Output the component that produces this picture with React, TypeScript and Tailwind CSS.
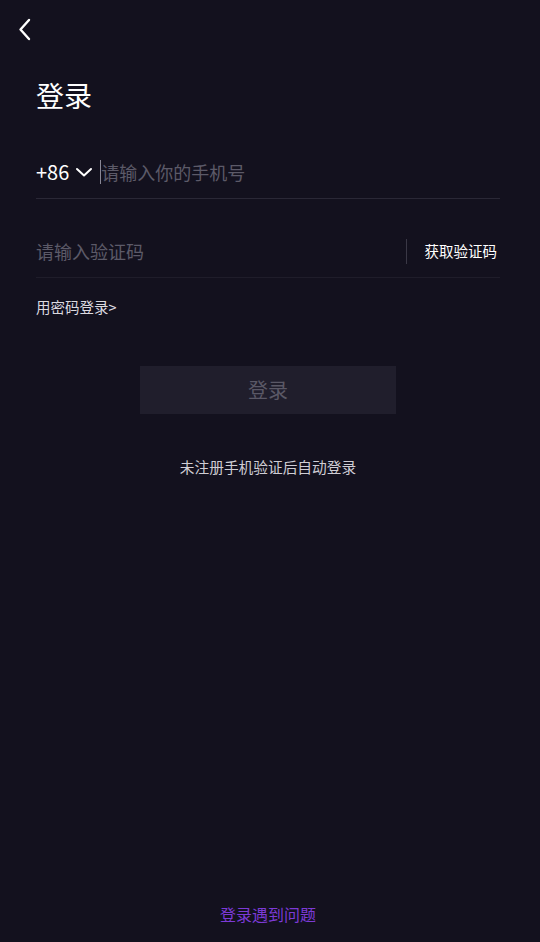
export default function App() {
  return (
    <div
      className="w-[540px] h-[942px] bg-[#13111e] flex flex-col text-white"
      style={{ fontFamily: '"Noto Sans CJK SC", "Noto Sans", sans-serif' }}
    >
      <div className="h-[75px] pl-[16px] pt-[16px]">
        <svg width="20" height="28" viewBox="0 0 20 28" fill="none">
          <path d="M13 4 L4.5 13.5 L13 23" stroke="#ffffff" strokeWidth="2.4" strokeLinecap="round" strokeLinejoin="round" />
        </svg>
      </div>

      <div className="pl-[36px] pr-[40px]">
        <h1 className="text-[28px] leading-[40px] font-normal">登录</h1>

        <div className="mt-[31px] h-[53px] flex items-center border-b border-[#2a2836]">
          <span className="text-[20px] leading-none">+86</span>
          <svg className="ml-[6px]" width="18" height="12" viewBox="0 0 18 12" fill="none">
            <path d="M2 3 L9 9.5 L16 3" stroke="#ffffff" strokeWidth="2" strokeLinecap="round" strokeLinejoin="round" />
          </svg>
          <div className="ml-[7px] w-px h-[24px] bg-[#8a8896]" />
          <span className="text-[18px] text-[#5c5a68]">请输入你的手机号</span>
        </div>

        <div className="h-[79px] pt-[26px] flex items-center border-b border-[#1f1d2a]">
          <span className="flex-1 text-[18px] text-[#5c5a68]">请输入验证码</span>
          <div className="w-px h-[25px] bg-[#3a3846]" />
          <span className="ml-[18px] mr-[3px] text-[14.5px]">获取验证码</span>
        </div>

        <div className="mt-[19px] text-[14.5px] leading-[20px] text-[#dcdae0]">用密码登录&gt;</div>
      </div>

      <div className="pr-[4px]">
        <div className="mt-[49px] flex justify-center">
          <div className="w-[256px] h-[48px] bg-[#201e2c] flex items-center justify-center text-[20px] text-[#5a5866]">
            登录
          </div>
        </div>

        <div className="mt-[41px] text-center text-[14.7px] leading-[24px] text-[#cfcdd4]">未注册手机验证后自动登录</div>
      </div>

      <div className="mt-auto mb-[16px] pr-[4px] text-center text-[16px] leading-[24px] text-[#7c3ad6]">登录遇到问题</div>
    </div>
  )
}
